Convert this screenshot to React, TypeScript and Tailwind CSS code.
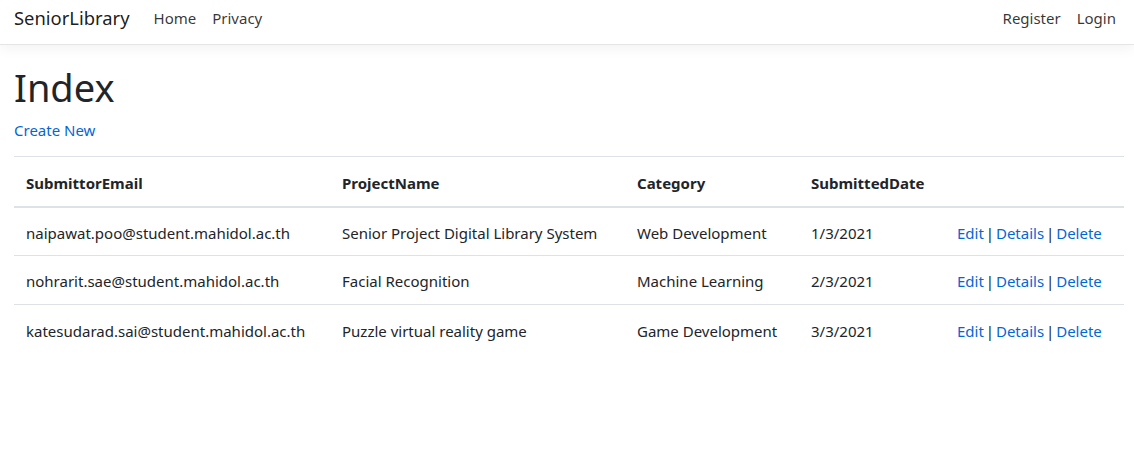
import React from "react";

const rows = [
  ["naipawat.poo@student.mahidol.ac.th", "Senior Project Digital Library System", "Web Development", "1/3/2021"],
  ["nohrarit.sae@student.mahidol.ac.th", "Facial Recognition", "Machine Learning", "2/3/2021"],
  ["katesudarad.sai@student.mahidol.ac.th", "Puzzle virtual reality game", "Game Development", "3/3/2021"],
];

export default function App() {
  return (
    <div className="min-h-[459px] bg-white text-[#212529]" style={{ fontFamily: '"Noto Sans", "Open Sans", sans-serif' }}>
      <nav className="h-[45px] border-b border-[#e5e5e5] shadow-[0_4px_12px_rgba(0,0,0,0.05)] flex items-center px-[14px] pb-[8px]">
        <span className="text-[18.4px] text-[rgba(0,0,0,0.9)] mr-[24px]">SeniorLibrary</span>
        <div className="flex gap-[16px] text-[15px] text-[rgba(0,0,0,0.8)]">
          <span>Home</span>
          <span>Privacy</span>
        </div>
        <div className="ml-auto flex gap-[16px] text-[15px] text-[rgba(0,0,0,0.8)] pr-[4px]">
          <span>Register</span>
          <span>Login</span>
        </div>
      </nav>
      <main className="px-[14px] pt-[20px]">
        <h1 className="text-[38px] leading-[1.2] font-normal">Index</h1>
        <p className="mt-[8px] text-[15px] text-[#0366d6]">Create New</p>
        <table className="mt-[15px] w-[1110px] border-collapse text-[15px] table-fixed">
          <thead>
            <tr className="border-t border-[#dee2e6] border-b-2">
              <th className="w-[316px] text-left font-bold px-[12px] h-[50px] pt-[3px]">SubmittorEmail</th>
              <th className="w-[295px] text-left font-bold px-[12px] pt-[3px]">ProjectName</th>
              <th className="w-[174px] text-left font-bold px-[12px] pt-[3px]">Category</th>
              <th className="w-[146px] text-left font-bold px-[12px] pt-[3px]">SubmittedDate</th>
              <th className="px-[12px]"></th>
            </tr>
          </thead>
          <tbody>
            {rows.map((r, i) => (
              <tr key={i} className={i > 0 ? "border-t border-[#dee2e6]" : ""}>
                {r.map((c, j) => (
                  <td key={j} className="px-[12px] h-[49px] pt-[3px] whitespace-nowrap">{c}</td>
                ))}
                <td className="px-[12px] pt-[3px] whitespace-nowrap [word-spacing:-2px]">
                  <span className="text-[#0366d6]">Edit</span> | <span className="text-[#0366d6]">Details</span> | <span className="text-[#0366d6]">Delete</span>
                </td>
              </tr>
            ))}
          </tbody>
        </table>
      </main>
    </div>
  );
}
